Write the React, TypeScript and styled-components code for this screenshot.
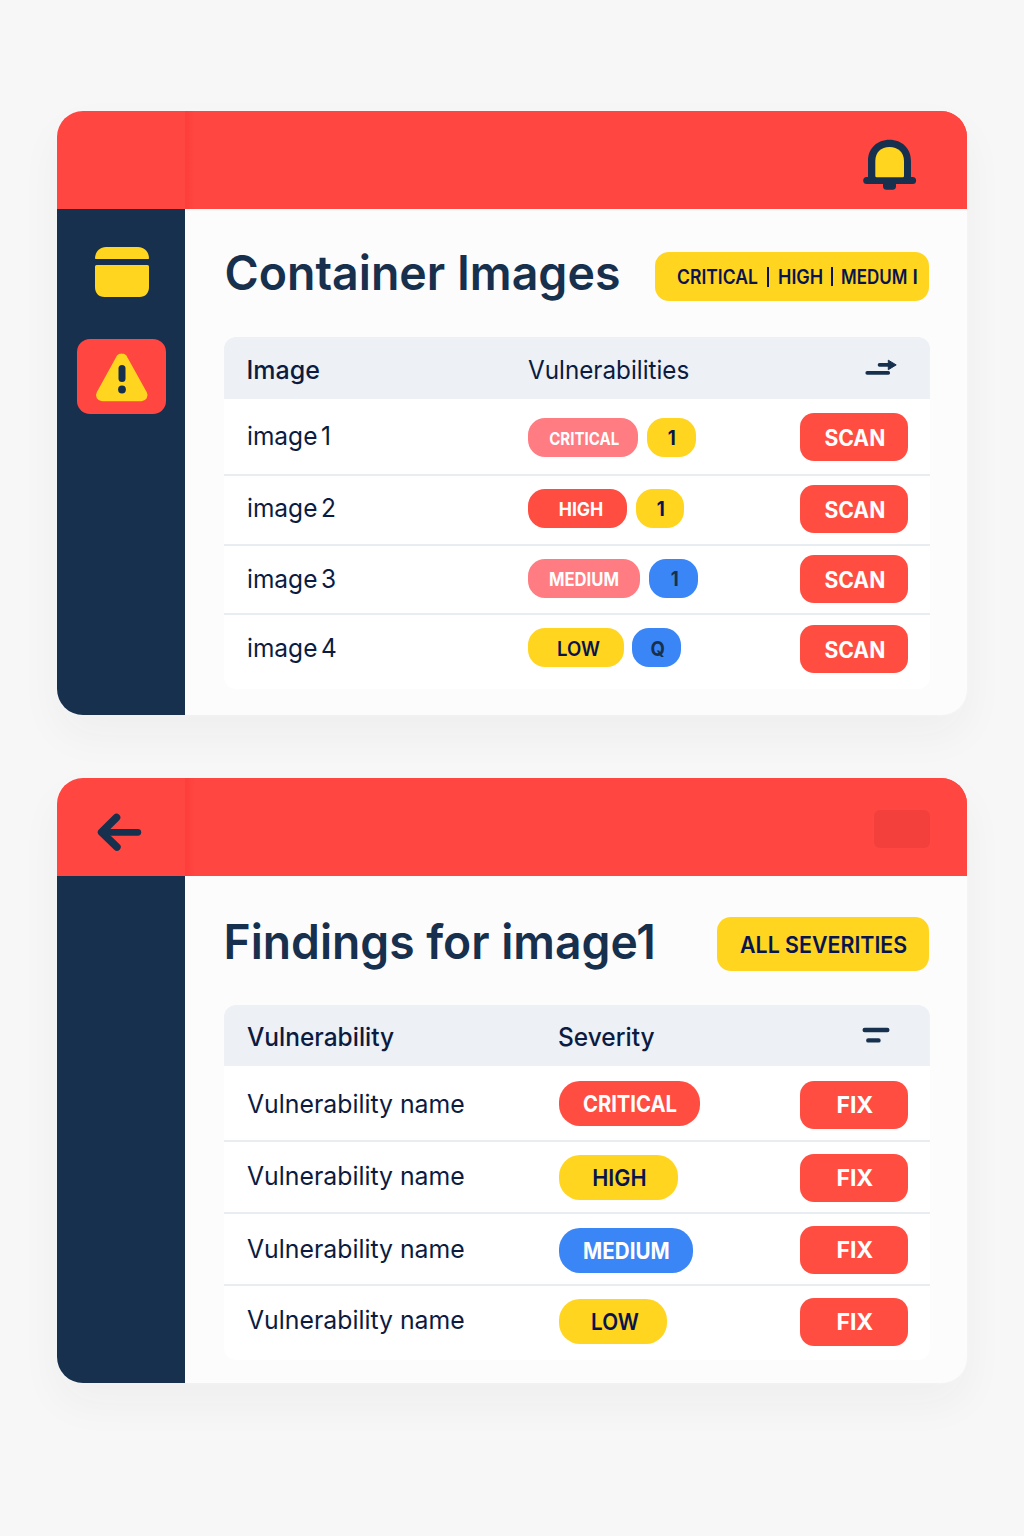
import React from "react";
import styled, { createGlobalStyle } from "styled-components";

const c = {
  red: "#ff4641",
  action: "#ff4d42",
  pink: "#ff7c82",
  yellow: "#ffd520",
  blue: "#3b86f7",
  navy: "#17304e",
  ink: "#0b1b41",
  label: "#07144f",
  white: "#ffffff",
};

const GlobalStyle = createGlobalStyle`
  * { box-sizing: border-box; }
  body {
    margin: 0;
    background: #f7f7f7;
    color: ${c.ink};
    font-family: Inter, "Liberation Sans", sans-serif;
  }
`;

const Page = styled.main`
  width: 1024px;
  height: 1536px;
  padding: 111px 57px 0;
  display: flex;
  flex-direction: column;
  gap: 63px;
  overflow: hidden;
`;

const Card = styled.section<{ $height: number }>`
  width: 910px;
  height: ${(p) => p.$height}px;
  display: flex;
  flex-direction: column;
  flex: none;
  border-radius: 26px;
  background: #fcfcfc;
  box-shadow: 0 20px 44px rgba(40, 45, 55, 0.045), 0 0 3px rgba(255, 255, 255, 0.9);
  overflow: hidden;
`;

const TopBar = styled.header`
  height: 98px;
  flex: none;
  display: flex;
  background: ${c.red};
`;

const TopCorner = styled.div`
  width: 128px;
  display: flex;
  align-items: center;
  padding: 10px 0 0 40px;
`;

const TopMain = styled.div`
  flex: 1;
  display: flex;
  justify-content: flex-end;
  background: linear-gradient(90deg, #fd3d3a 0, ${c.red} 10px);
`;

const BellSlot = styled.div`
  padding: 28px 50px 0 0;
`;

const GhostBlock = styled.div`
  width: 56px;
  height: 38px;
  margin: 32px 37px 0 0;
  border-radius: 6px;
  background: #f3403c;
`;

const Body = styled.div`
  flex: 1;
  display: flex;
`;

const Sidebar = styled.nav`
  width: 128px;
  background: ${c.navy};
  display: flex;
  flex-direction: column;
  align-items: center;
  padding: 37px 0 0 1px;
  gap: 42px;
`;

const NavTile = styled.div`
  width: 89px;
  height: 75px;
  border-radius: 13px;
  background: ${c.red};
  display: flex;
  justify-content: center;
  padding-top: 13px;
`;

const Content = styled.div`
  flex: 1;
  padding: 0 37px 0 39px;
`;

const TitleRow = styled.div<{ $top: number; $height: number }>`
  display: flex;
  justify-content: space-between;
  align-items: flex-start;
  padding: ${(p) => p.$top}px 1px 0 0;
  height: ${(p) => p.$height}px;
`;

/* Text whose letterforms are narrowed horizontally; anchored left or centred. */
const Text = styled.span<{
  $size: number;
  $weight?: number;
  $fit?: number;
  $color?: string;
  $center?: boolean;
  $shift?: number;
  $rise?: number;
  $space?: number;
}>`
  display: block;
  flex: none;
  font-size: ${(p) => p.$size}px;
  font-weight: ${(p) => p.$weight ?? 400};
  line-height: 1;
  color: ${(p) => p.$color ?? c.ink};
  white-space: nowrap;
  word-spacing: ${(p) => p.$space ?? 0}px;
  transform-origin: ${(p) => (p.$center ? "center" : "left")};
  transform: translate(${(p) => p.$shift ?? 0}px, ${(p) => p.$rise ?? 0}px) scaleX(${(p) => p.$fit ?? 1});
`;

const Title = styled(Text).attrs({ as: "h1" })`
  margin: 0;
`;

const FilterBox = styled.div<{ $width: number; $height: number; $left: number }>`
  width: ${(p) => p.$width}px;
  height: ${(p) => p.$height}px;
  padding-left: ${(p) => p.$left}px;
  border-radius: 14px;
  background: ${c.yellow};
  display: flex;
  align-items: center;
`;

const FilterItem = styled.div<{ $width: number }>`
  width: ${(p) => p.$width}px;
  flex: none;
`;

const Divider = styled.div<{ $gap: number; $height: number }>`
  width: 2px;
  height: ${(p) => p.$height}px;
  margin-right: ${(p) => p.$gap}px;
  background: ${c.label};
`;

const Table = styled.div`
  width: 706px;
  border-radius: 12px;
  background: ${c.white};
  overflow: hidden;
`;

const Row = styled.div<{ $height: number; $top: number; $mid: number; $last?: boolean }>`
  display: grid;
  grid-template-columns: ${(p) => p.$mid}px 1fr 108.5px;
  grid-template-rows: 48px;
  align-items: center;
  height: ${(p) => p.$height}px;
  padding: ${(p) => p.$top}px 22px 0 23px;
  border-bottom: ${(p) => (p.$last ? "0" : "2px solid #e8edf1")};
`;

const HeadRow = styled(Row)`
  background: #edf0f4;
  border-bottom: 0;
`;

const HeadIcon = styled.div<{ $left: number; $lift: number }>`
  display: flex;
  padding-left: ${(p) => p.$left}px;
  padding-bottom: ${(p) => p.$lift}px;
`;

const Pills = styled.div<{ $top: number; $gap?: number }>`
  display: flex;
  gap: ${(p) => p.$gap ?? 9}px;
  padding-top: ${(p) => p.$top}px;
  align-self: start;
`;

const Pill = styled.div<{ $width: number; $height: number; $bg: string; $r: number }>`
  width: ${(p) => p.$width}px;
  height: ${(p) => p.$height}px;
  border-radius: ${(p) => p.$r}px;
  background: ${(p) => p.$bg};
  display: flex;
  align-items: center;
  justify-content: center;
`;

const ActionButton = styled.button`
  height: 48px;
  border: 0;
  padding: 0;
  border-radius: 14px;
  background: ${c.action};
  font-family: inherit;
  display: flex;
  align-items: center;
  justify-content: center;
`;

const BellIcon = () => (
  <svg width="54" height="52" viewBox="0 0 54 52">
    <path d="M5 38V22C5 9.500 14 .800 26.500 .800S48 9.500 48 22V38H49.600a3.500 3.500 0 0 1 0 7H3.700a3.500 3.500 0 0 1 0-7Z" fill={c.navy} />
    <path d="M20 44.500h13v3a3.500 3.500 0 0 1-3.500 3.200h-6a3.500 3.500 0 0 1-3.500-3.200Z" fill={c.navy} />
    <path d="M12.300 37V22C12.300 13.500 18 8 26.500 8S41 13.500 41 22V37a1.200 1.200 0 0 1-1.200 1.200H13.500a1.200 1.200 0 0 1-1.200-1.200Z" fill={c.yellow} />
  </svg>
);

const BoxIcon = () => (
  <svg width="54" height="51" viewBox="0 0 54 51">
    <path d="M.800 13a.800.800 0 0 1-.800-.800C.300 5.500 4.800 1 11 1h32C49.200 1 53.700 5.500 54 12.200a.800.800 0 0 1-.800.800Z" fill={c.yellow} />
    <path d="M1.500 19h51A1.500 1.500 0 0 1 54 20.500V41c0 6-3.500 10-9.500 10h-35C3.500 51 0 47 0 41V20.500A1.500 1.500 0 0 1 1.500 19Z" fill={c.yellow} />
  </svg>
);

const AlertIcon = () => (
  <svg width="54" height="51" viewBox="0 0 54 51">
    <path
      d="M26.700 6.500a1 1 0 0 1 1 .6l19.700 35.600a1 1 0 0 1-.9 1.500H7a1 1 0 0 1-.9-1.500L25.700 7.100a1 1 0 0 1 1-.6Z"
      fill={c.yellow}
      stroke={c.yellow}
      strokeWidth="10"
      strokeLinejoin="round"
    />
    <rect x="23.500" y="13" width="7" height="17" rx="3.500" fill={c.navy} />
    <circle cx="27" cy="37.500" r="3.900" fill={c.navy} />
  </svg>
);

const BackIcon = () => (
  <svg width="46" height="40" viewBox="0 0 46 40" fill="none" stroke={c.navy} strokeWidth="6.800" strokeLinecap="round" strokeLinejoin="round">
    <path d="M19.500 5.500 4.600 20.300 19.900 35" strokeWidth="7.600" />
    <path d="M7 20.300H40.800" />
  </svg>
);

const SortIcon = () => (
  <svg width="32" height="18" viewBox="0 0 32 18">
    <path d="M2.200 13.900H23.300M14.500 5.900H24" stroke={c.navy} strokeWidth="3.600" strokeLinecap="round" />
    <path d="M23.300 1.200 31.200 5.900 23.300 10.700Z" fill={c.navy} stroke={c.navy} strokeWidth="1" strokeLinejoin="round" />
  </svg>
);

const LinesIcon = () => (
  <svg width="28" height="18" viewBox="0 0 28 18" stroke={c.navy} strokeWidth="4.400" strokeLinecap="round">
    <path d="M2.700 4H25.300M6.300 14.400H16.500" />
  </svg>
);

type Tag = { text: string; width: number; size: number; fit: number; weight: number; bg: string; fg: string; shift?: number };
type ImageRow = { name: string; height: number; top: number; pillTop: number; gap: number; rise: number; tags: Tag[] };

const tag = (text: string, width: number, size: number, fit: number, bg: string, fg: string, shift = 0, weight = 700): Tag => ({
  text, width, size, fit, bg, fg, shift, weight,
});

const images: ImageRow[] = [
  { name: "image 1", height: 77, top: 14, pillTop: 5, gap: 9, rise: -1, tags: [tag("CRITICAL", 110, 17.5, 0.86, c.pink, c.white, 1.5), tag("1", 49, 19.5, 0.95, c.yellow, c.label, 0.5)] },
  { name: "image 2", height: 70, top: 9, pillTop: 4, gap: 9, rise: -1.5, tags: [tag("HIGH", 99, 19, 0.93, c.action, c.white, 3), tag("1", 48, 19.5, 0.95, c.yellow, c.label, 0.5)] },
  { name: "image 3", height: 69, top: 9, pillTop: 4, gap: 9, rise: -0.5, tags: [tag("MEDIUM", 111.5, 18.5, 0.9, c.pink, c.white), tag("1", 49, 19.5, 0.95, c.blue, c.navy, 1.5)] },
  { name: "image 4", height: 74, top: 10, pillTop: 3, gap: 8, rise: -1.5, tags: [tag("LOW", 96, 20, 0.93, c.yellow, c.label, 2.5, 600), tag("Q", 49, 20, 0.93, c.blue, c.navy, 1)] },
];

const findings = [
  { height: 76, top: 15, pillTop: 0, rise: -1.5, tag: tag("CRITICAL", 141, 23, 0.88, c.action, c.white, 0.5) },
  { height: 72, top: 12, pillTop: 1, rise: -2, tag: tag("HIGH", 119, 22.5, 0.96, c.yellow, c.label, 1, 600) },
  { height: 72, top: 12, pillTop: 2, rise: -1, tag: tag("MEDIUM", 134, 23, 0.895, c.blue, c.white) },
  { height: 74, top: 12, pillTop: 1, rise: -2, tag: tag("LOW", 108, 22.5, 0.92, c.yellow, c.label, 2, 600) },
];

const TagPill = ({ t, height, radius, rise }: { t: Tag; height: number; radius: number; rise: number }) => (
  <Pill $width={t.width} $height={height} $bg={t.bg} $r={radius}>
    <Text $size={t.size} $weight={t.weight} $fit={t.fit} $color={t.fg} $center $shift={t.shift} $rise={rise}>
      {t.text}
    </Text>
  </Pill>
);

const ImagesCard = () => (
  <Card $height={604}>
    <TopBar>
      <TopCorner />
      <TopMain>
        <BellSlot><BellIcon /></BellSlot>
      </TopMain>
    </TopBar>
    <Body>
      <Sidebar>
        <BoxIcon />
        <NavTile><AlertIcon /></NavTile>
      </Sidebar>
      <Content>
        <TitleRow $top={43} $height={128}>
          <Title $size={48} $weight={580} $fit={0.968} $color={c.navy} $rise={-3} $shift={0.5}>Container Images</Title>
          <FilterBox $width={274} $height={49} $left={21.5}>
            <FilterItem $width={90}><Text $size={19.5} $weight={600} $fit={0.9} $color={c.label} $rise={0.5}>CRITICAL</Text></FilterItem>
            <Divider $gap={9} $height={20} />
            <FilterItem $width={53}><Text $size={19.5} $weight={600} $fit={0.92} $color={c.label} $rise={0.5}>HIGH</Text></FilterItem>
            <Divider $gap={8} $height={19} />
            <FilterItem $width={72}><Text $size={19.5} $weight={600} $fit={0.87} $color={c.label} $rise={0.5}>MEDUM</Text></FilterItem>
            <Text $size={19.5} $weight={600} $color={c.label} $rise={0.5}>I</Text>
          </FilterBox>
        </TitleRow>
        <Table>
          <HeadRow $height={62} $top={9} $mid={281}>
            <Text $size={25.5} $weight={500} $fit={0.98} $shift={-0.5}>Image</Text>
            <Text $size={25.5} $weight={430} $fit={0.95}>Vulnerabilities</Text>
            <HeadIcon $left={65} $lift={5}><SortIcon /></HeadIcon>
          </HeadRow>
          {images.map((r, i) => (
            <Row key={r.name} $height={r.height} $top={r.top} $mid={281} $last={i === 3}>
              <Text $size={25.5} $weight={430} $fit={0.96} $rise={r.rise} $space={-3.5}>{r.name}</Text>
              <Pills $top={r.pillTop} $gap={r.gap}>
                {r.tags.map((t) => <TagPill key={t.text} t={t} height={39} radius={17} rise={0.5} />)}
              </Pills>
              <ActionButton>
                <Text $size={22.5} $weight={700} $fit={0.94} $color={c.white} $center $shift={1.5} $rise={0.5}>SCAN</Text>
              </ActionButton>
            </Row>
          ))}
        </Table>
      </Content>
    </Body>
  </Card>
);

const FindingsCard = () => (
  <Card $height={605}>
    <TopBar>
      <TopCorner><BackIcon /></TopCorner>
      <TopMain><GhostBlock /></TopMain>
    </TopBar>
    <Body>
      <Sidebar />
      <Content>
        <TitleRow $top={41} $height={129}>
          <Title $size={48} $weight={580} $fit={0.963} $color={c.navy} $rise={1} $shift={-0.5}>Findings for image1</Title>
          <FilterBox $width={212} $height={54} $left={22.5}>
            <Text $size={22.5} $weight={600} $fit={0.95} $color={c.label} $rise={0.5}>ALL SEVERITIES</Text>
          </FilterBox>
        </TitleRow>
        <Table>
          <HeadRow $height={61} $top={8} $mid={311}>
            <Text $size={25.5} $weight={470} $fit={0.96}>Vulnerability</Text>
            <Text $size={25.5} $weight={470} $fit={0.96}>Severity</Text>
            <HeadIcon $left={62} $lift={4}><LinesIcon /></HeadIcon>
          </HeadRow>
          {findings.map((r, i) => (
            <Row key={i} $height={r.height} $top={r.top} $mid={312} $last={i === 3}>
              <Text $size={25.5} $weight={420} $fit={0.973} $rise={r.rise}>Vulnerability name</Text>
              <Pills $top={r.pillTop}>
                <TagPill t={r.tag} height={45} radius={21} rise={0.5} />
              </Pills>
              <ActionButton>
                <Text $size={23.5} $weight={700} $fit={0.98} $color={c.white} $center $shift={1} $rise={-0.5}>FIX</Text>
              </ActionButton>
            </Row>
          ))}
        </Table>
      </Content>
    </Body>
  </Card>
);

export default function App() {
  return (
    <>
      <GlobalStyle />
      <Page>
        <ImagesCard />
        <FindingsCard />
      </Page>
    </>
  );
}
